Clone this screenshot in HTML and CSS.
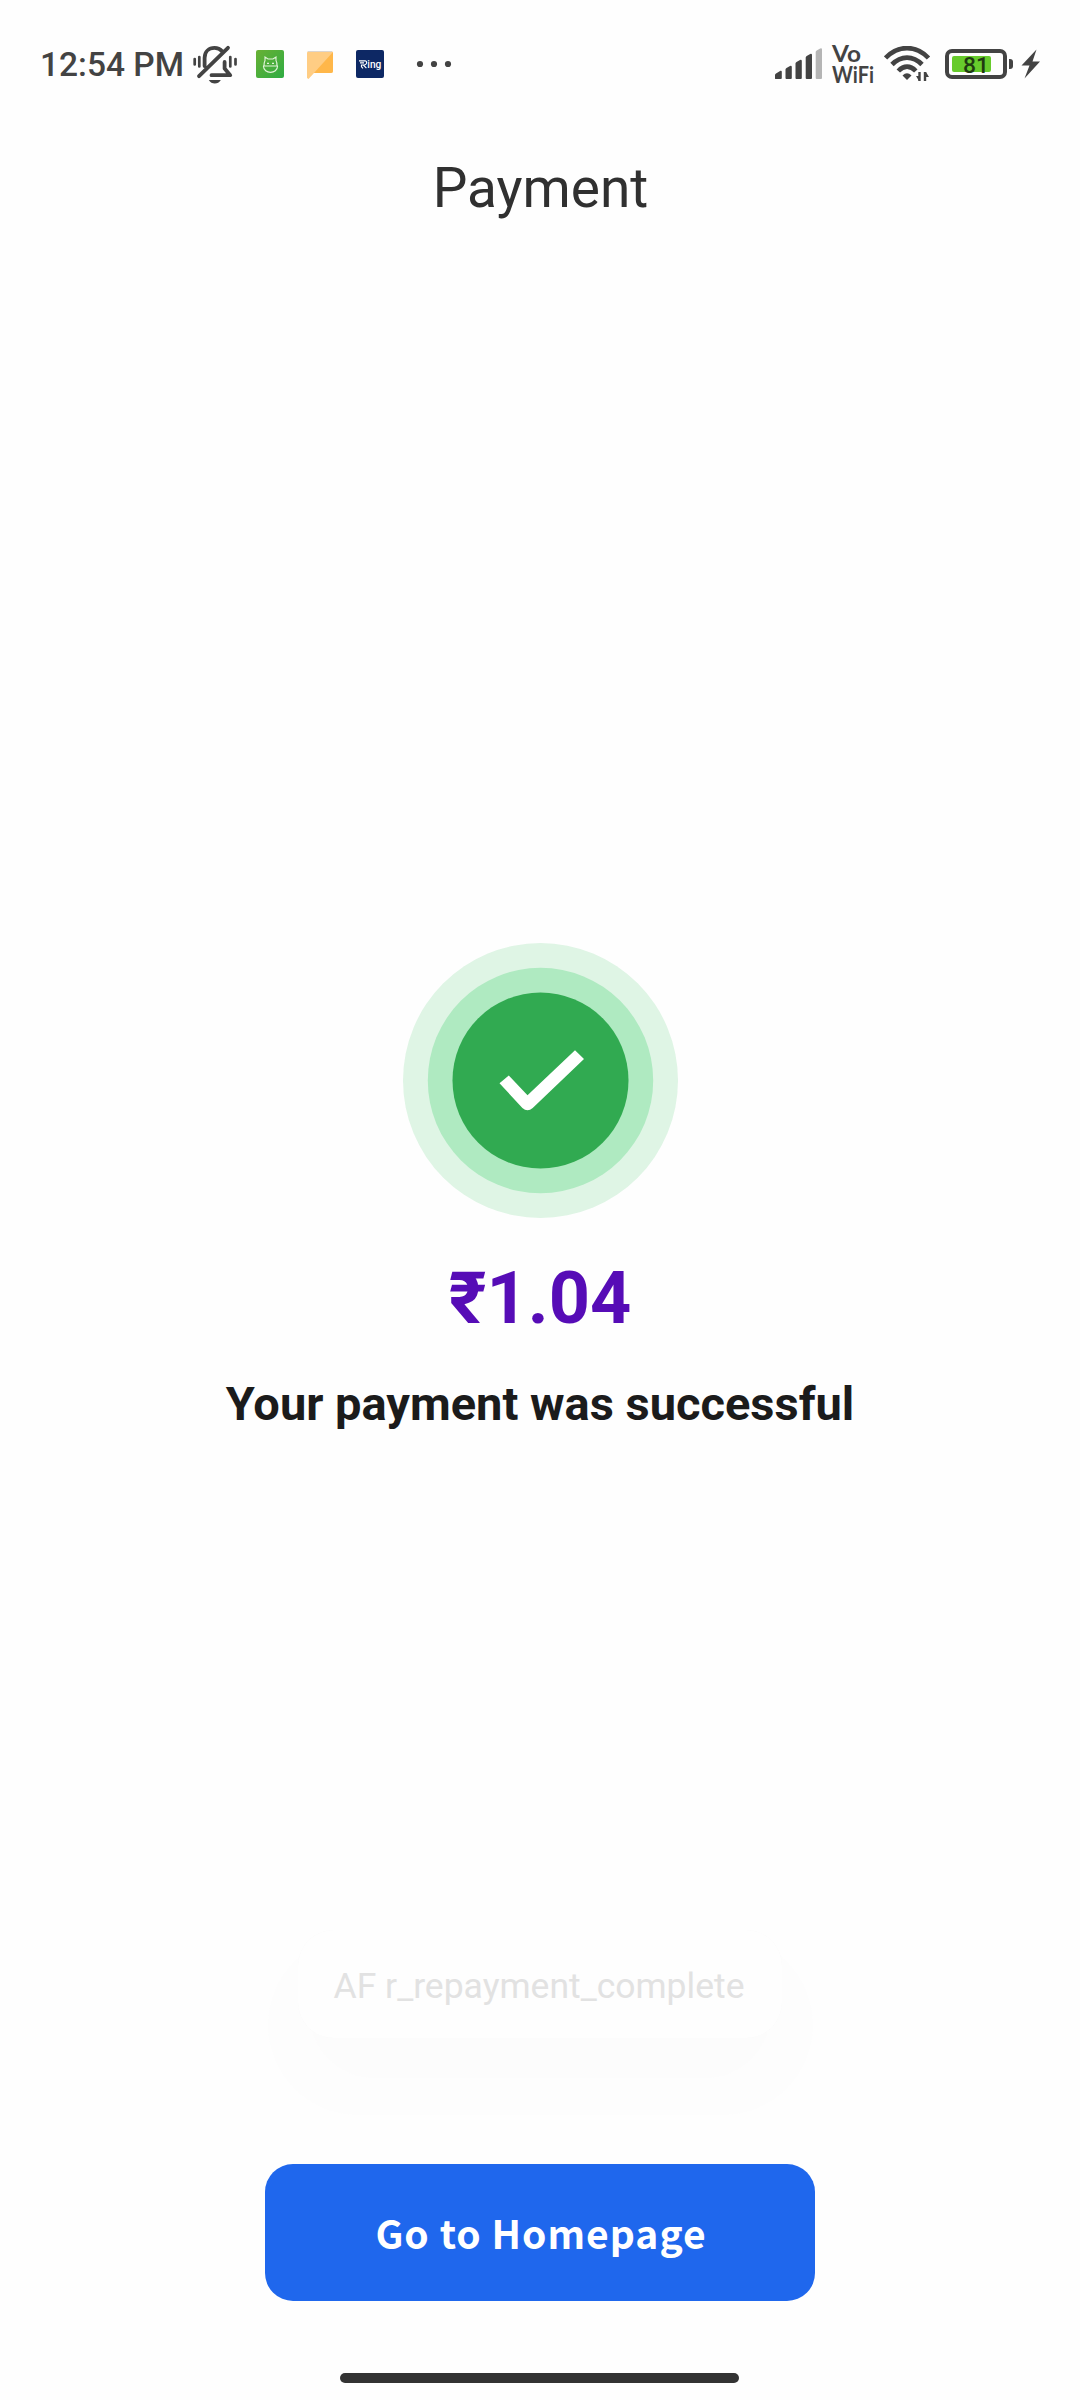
FILE: index.html
```html
<!DOCTYPE html>
<html lang="en">
<head>
<meta charset="utf-8">
<title>Payment</title>
<link rel="stylesheet" href="styles.css">
</head>
<body>
<div class="screen">
  <div class="status-bar">
    <div class="status-left">
      <span class="clock">12:54 PM</span>
      <svg class="icon-mute" width="46" height="40" viewBox="0 0 46 40" fill="none" stroke="#434343" stroke-width="3.800" stroke-linecap="round" stroke-linejoin="round">
        <path d="M12.600 22V14C12.600 7.500 17 3.900 22.500 3.900c3.200 0 5.800 1.200 7.600 3.300M36 3.800L7 32.200M32.600 18v6.500l5.600 6.700H19.500"/>
        <path d="M2.700 15v5.500M7.300 13v9.500M38.300 13v9.500M43.500 15v5.500" stroke-width="2.700"/>
        <path d="M16.800 36h12c-2.500 4.700-9.500 4.700-12 0z" fill="#434343" stroke="none"/>
      </svg>
      <svg class="icon-app" width="28" height="28" viewBox="0 0 28 28">
        <defs><linearGradient id="leaf" x1="0" y1="0" x2="1" y2="1"><stop offset="0" stop-color="#69b134"/><stop offset="1" stop-color="#2eac43"/></linearGradient></defs>
        <rect width="28" height="28" rx="2" fill="url(#leaf)"/>
        <path d="M8 16c0-2.500.2-4 1-5.500V7l3 2h5l3-2v3.500c1 1.500 1 3 1 5.500M7 16h15M7.400 16c.2 8.500 14 8.500 14.200 0" fill="none" stroke="#e2f4d9" stroke-width="1.100"/>
        <path d="M11 13.300h2M16 13.300h2" stroke="#e2f4d9" stroke-width="1.200"/>
      </svg>
      <svg class="icon-chat" width="26" height="28" viewBox="0 0 26 28">
        <path d="M2 0h22q2 0 2 2v18q0 2-2 2H7l-5.500 6L0 27V2q0-2 2-2z" fill="#ffcd84"/>
        <path d="M26 1v19q0 2-2 2H7z" fill="#ffb74a"/>
        <path d="M1 .5h24" stroke="#ddd5ce"/>
      </svg>
      <svg class="icon-app" width="28" height="28" viewBox="0 0 28 28">
        <rect width="28" height="28" rx="2" fill="#0d2864"/>
        <path d="M3 10.800h6.200q1.900.4 1.300 2.500-.5 1.700-2.700 1.700H5M4 12.900h4M7.400 15l3 3.100M5.500 14.500v2.300l1.500 1.500" fill="none" stroke="#fff" stroke-width="1.150"/>
        <text x="11.300" y="18" class="ring-label" textLength="14" lengthAdjust="spacingAndGlyphs">ing</text>
      </svg>
      <svg class="icon-more" width="36" height="8" viewBox="0 0 36 8" fill="#434343"><circle cx="4" cy="4" r="3.100"/><circle cx="18" cy="4" r="3.100"/><circle cx="32" cy="4" r="3.100"/></svg>
    </div>
    <div class="status-right">
      <svg width="48" height="32" viewBox="0 0 48 32" fill="#434343">
        <path d="M0 30.500v-3.500q0-1 1-1.500l4.500-2.700q1.300-.3 1.300 1V30q0 1-1 1H1q-1 0-1-.5zM10.500 21.500q0-1 1-1.600l3.500-2q1.800-.5 1.800 1V30q0 1-1 1h-4.300q-1 0-1-1zM20.500 15.500q0-1 1-1.600l3.500-2q1.800-.5 1.800 1V30q0 1-1 1h-4.300q-1 0-1-1zM30.700 9.500q0-1 1-1.600l3.500-2q1.800-.5 1.800 1V30q0 1-1 1h-4.300q-1 0-1-1z"/>
        <path d="M40.700 4q0-1 1-1.600l3.500-2q1.800-.5 1.800 1V30q0 1-1 1h-4.300q-1 0-1-1z" fill="#b5b5b5"/>
      </svg>
      <div class="vowifi">
        <svg width="42" height="21" viewBox="0 0 42 21"><text x="0" y="18.500" class="vo-label" textLength="29" lengthAdjust="spacingAndGlyphs">Vo</text></svg>
        <svg width="42" height="21" viewBox="0 0 42 21"><text x="0" y="18.500" class="vo-label" textLength="42" lengthAdjust="spacingAndGlyphs">WiFi</text></svg>
      </div>
      <svg class="icon-wifi" width="48" height="36" viewBox="0 0 48 36" fill="none" stroke="#434343" stroke-width="4.700">
        <path d="M1.500 12C14-1.200 32-1.200 44.500 12M8 18.500c9-9.300 21-9.300 30 0M14.300 25c5.500-5.800 12-5.800 17.500 0"/>
        <path d="M18.500 29.500q4.500-4.500 9 0L23 34z" fill="#434343" stroke="none"/>
        <path d="M35.500 26v9M41 26v9" stroke-width="2.400"/><path d="M32 30h3v5zM42 31h3l-3-5z" fill="#434343" stroke="none"/>
      </svg>
      <svg class="icon-battery" width="69" height="30" viewBox="0 0 69 30">
        <rect x="2" y="2" width="58" height="26" rx="5" fill="none" stroke="#434343" stroke-width="4"/>
        <rect x="7" y="7" width="39" height="16" rx="2" fill="#67cb2c"/>
        <path d="M64 10h1q3 0 3 3v4q0 3-3 3h-1z" fill="#434343"/>
        <text x="18" y="23.500" class="battery-label" textLength="26" lengthAdjust="spacingAndGlyphs">81</text>
      </svg>
      <svg class="icon-bolt" width="20" height="30" viewBox="0 0 20 30" fill="#434343"><path d="M15.500.5L.5 16.500h8L3.500 29.500l15.500-17H11.500z"/></svg>
    </div>
  </div>

  <header class="header"><h1 class="title">Payment</h1></header>

  <main class="result">
    <svg class="badge" width="276" height="276" viewBox="-0.500 0 276 276">
      <circle cx="138" cy="137.500" r="137.500" fill="#dff5e5"/>
      <circle cx="138" cy="137.500" r="112.700" fill="#afeac1"/>
      <circle cx="138" cy="137.500" r="88" fill="#31aa51"/>
      <path d="M97 140.200l9.300-7.600 18.700 19.600 47.500-45 9 8.800-51.300 49.100q-5.200 4.500-10.300 0z" fill="#fff"/>
    </svg>
    <p class="amount">₹1.04</p>
    <p class="message">Your payment was successful</p>
  </main>

  <footer class="footer">
    <button class="home-button" type="button">Go to Homepage</button>
    <div class="gesture-bar"></div>
  </footer>

  <div class="toast">
    <div class="toast-shade toast-shade-outer"></div>
    <div class="toast-shade toast-shade-inner"></div>
    <div class="toast-body">AF r_repayment_complete</div>
  </div>
</div>
</body>
</html>
```
FILE: styles.css
```css
* { box-sizing: border-box; }
body { margin: 0; background: #fefefe; font-family: Roboto, sans-serif; }
h1, p { margin: 0; font-weight: 400; }
svg { display: block; flex: none; }

.screen {
  position: relative;
  width: 1080px;
  height: 2400px;
  display: flex;
  flex-direction: column;
  background: #fefefe;
  overflow: hidden;
}

.status-bar {
  height: 128px;
  padding: 0 39px 0 40px;
  display: flex;
  align-items: center;
  justify-content: space-between;
}
.status-left, .status-right { display: flex; align-items: center; }
.clock {
  width: 152px;
  font-size: 33.5px;
  font-weight: 500;
  line-height: 40px;
  white-space: nowrap;
  color: #434343;
  padding-top: 2px;
}
.icon-app { margin-left: 18px; }
.icon-chat { margin: 2px 5px 0 23px; }
.icon-more { margin-left: 32px; }
.ring-label { font: 500 10.5px Roboto, sans-serif; fill: #fff; }
.vowifi { margin-left: 9px; }
.vo-label { font: 700 22px Lato, sans-serif; fill: #434343; }
.vowifi svg { overflow: visible; }
.icon-wifi { margin: 0 13px 0 10px; }
.icon-battery { margin-right: 7px; }
.battery-label { font: 500 22px Roboto, sans-serif; fill: #1f3a12; }

.header { height: 120px; display: flex; align-items: center; justify-content: center; }
.title { font-size: 55px; line-height: 64px; padding-left: 1px; color: #303030; }

.result {
  flex: 1;
  padding-top: 695px;
  display: flex;
  flex-direction: column;
  align-items: center;
}
.amount {
  margin-top: 38px;
  font-size: 72px;
  line-height: 84px;
  font-weight: 700;
  color: #560cb6;
}
.message {
  margin-top: 35px;
  font-size: 47px;
  line-height: 56px;
  font-weight: 700;
  color: #1b1b1b;
}

.footer {
  height: 236px;
  padding-bottom: 17px;
  display: flex;
  flex-direction: column;
  align-items: center;
  justify-content: space-between;
}
.home-button {
  width: 550px;
  height: 137px;
  padding: 0 0 2px 2px;
  border: 0;
  border-radius: 28px;
  background: #1f67ed;
  color: #fff;
  font: 700 39px "Noto Sans CJK SC", sans-serif;
  letter-spacing: 1px;
}
.gesture-bar { width: 399px; height: 10px; margin-right: 1px; border-radius: 5px; background: #333; }

.toast { position: absolute; left: 298px; top: 1930px; width: 484px; height: 108px; }
.toast-shade { position: absolute; }
.toast-shade-outer { left: -30px; right: -31px; top: 5px; bottom: -77px; border-radius: 90px; background: #fdfdfd; }
.toast-shade-inner { left: 12px; right: 12px; top: 20px; bottom: -40px; border-radius: 64px; background: #fcfcfc; }
.toast-body {
  position: relative;
  height: 108px;
  border-radius: 36px;
  display: flex;
  align-items: center;
  justify-content: center;
  background: #fefefe;
  box-shadow: 0 0 1px #f8f8f8;
  color: #e2e2e2;
  font-size: 35.5px;
  padding: 3px 2px 0 0;
}
```
